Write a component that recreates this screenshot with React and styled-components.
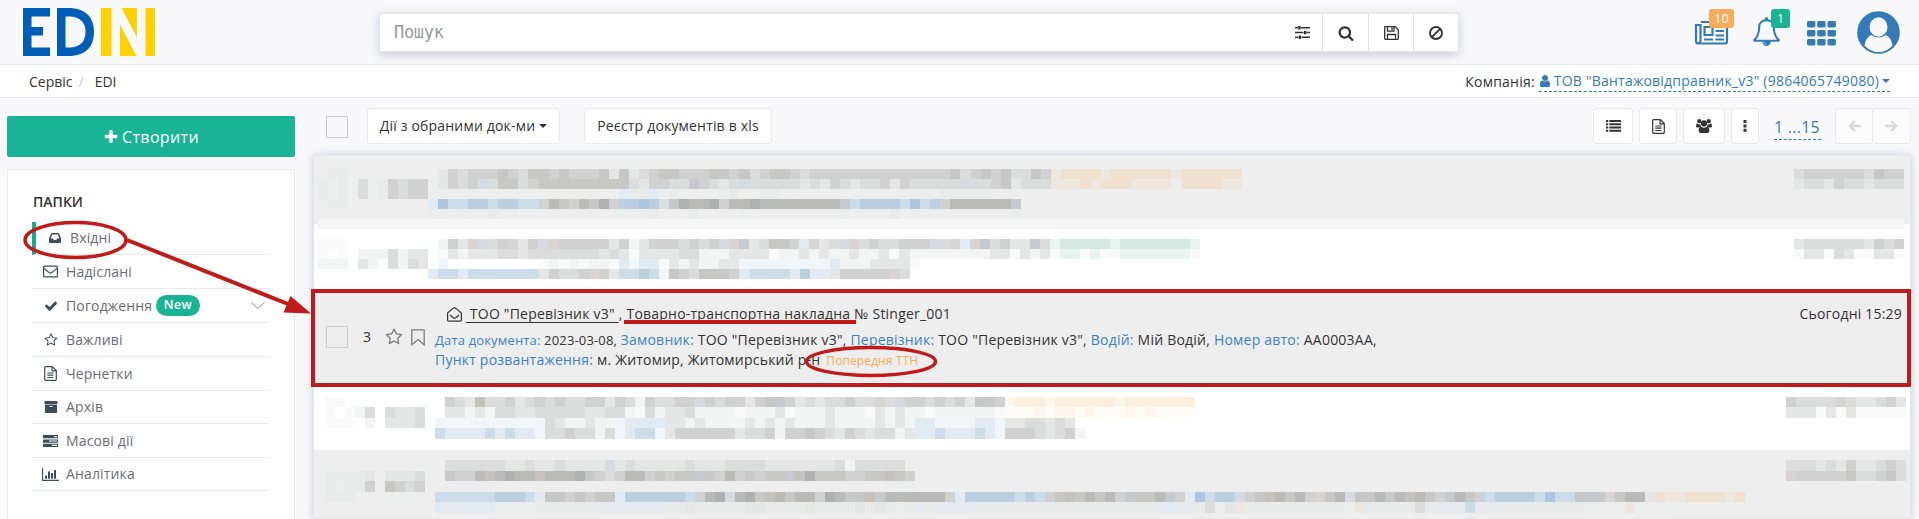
import React from 'react';
import styled, { createGlobalStyle, css } from 'styled-components';

const Global = createGlobalStyle`
  * { box-sizing: border-box; }
  html, body { margin: 0; height: 519px; overflow: hidden; }
  body { background: #f9f9fb; color: #333; font: 14px/20px "Open Sans", sans-serif; }
`;

/* ---------- icons ---------- */
const Glyph = styled.svg`
  display: block;
  flex: none;
  overflow: visible;
  fill: ${p => (p.$line ? 'none' : 'currentColor')};
  stroke: ${p => (p.$line ? 'currentColor' : 'none')};
  stroke-width: ${p => p.$line || 0};
`;
const FA = ({ d, w = 14, h = w, box = '0 0 1792 1792' }) => (
  <Glyph width={w} height={h} viewBox={box} preserveAspectRatio="none"><path d={d} /></Glyph>
);
const P = {
  bell: 'M912 1696q0-16-16-16-59 0-101.5-42.5t-42.5-101.5q0-16-16-16t-16 16q0 73 51.5 124.5t124.5 51.5q16 0 16-16zm-666-288h1300q-266-300-266-832 0-51-24-105t-69-103-121.5-80.5-169.5-31.5-169.5 31.5-121.5 80.5-69 103-24 105q0 532-266 832zm1482 0q0 52-38 90t-90 38h-448q0 106-75 181t-181 75-181-75-75-181h-448q-52 0-90-38t-38-90q50-42 91-88t85-119.5 74.5-158.5 50-206 19.5-260q0-152 117-282.5t307-158.5q-8-19-8-39 0-40 28-68t68-28 68 28 28 68q0 20-8 39 190 28 307 158.5t117 282.5q0 139 19.5 260t50 206 74.5 158.5 85 119.5 91 88z',
  star: 'M1201 1004l306-297-422-62-189-382-189 382-422 62 306 297-73 421 378-199 377 199zm527-357q0 22-26 48l-363 354 86 500q1 7 1 20 0 50-41 50-19 0-40-12l-449-236-449 236q-22 12-40 12-21 0-31.5-14.5t-10.5-35.5q0-6 2-20l86-500-364-354q-25-27-25-48 0-37 56-46l502-73 225-455q19-41 49-41t49 41l225 455 502 73q56 9 56 46z',
  search: 'M1216 832q0-185-131.5-316.5t-316.5-131.5-316.5 131.5-131.5 316.5 131.5 316.5 316.5 131.5 316.5-131.5 131.5-316.5zm512 832q0 52-38 90t-90 38q-54 0-90-38l-343-342q-179 124-399 124-143 0-273.5-55.5t-225-150-150-225-55.5-273.5 55.5-273.5 150-225 225-150 273.5-55.5 273.5 55.5 225 150 150 225 55.5 273.5q0 220-124 399l343 343q37 37 37 90z',
  check: 'M1671 566q0 40-28 68l-724 724-136 136q-28 28-68 28t-68-28l-136-136-362-362q-28-28-28-68t28-68l136-136q28-28 68-28t68 28l294 295 656-657q28-28 68-28t68 28l136 136q28 28 28 68z',
  plus: 'M1600 736v192q0 40-28 68t-68 28h-416v416q0 40-28 68t-68 28h-192q-40 0-68-28t-28-68v-416h-416q-40 0-68-28t-28-68v-192q0-40 28-68t68-28h416v-416q0-40 28-68t68-28h192q40 0 68 28t28 68v416h416q40 0 68 28t28 68z',
  user: 'M1536 1399q0 109-62.5 187t-150.5 78h-854q-88 0-150.5-78t-62.5-187q0-85 8.5-160.5t31.5-152 58.5-131 94-89 134.5-34.5q131 128 313 128t313-128q76 0 134.5 34.5t94 89 58.5 131 31.5 152 8.5 160.5zm-256-887q0 159-112.5 271.5t-271.5 112.5-271.5-112.5-112.5-271.5 112.5-271.5 271.5-112.5 271.5 112.5 112.5 271.5z',
  inbox: 'M1151 960h316q-1-3-2.5-8t-2.5-8l-212-496h-708l-212 496q-1 2-2.5 8t-2.5 8h316l95 192h320zm513 30v482q0 26-19 45t-45 19h-1408q-26 0-45-19t-19-45v-482q0-62 25-123l238-552q10-25 36.5-42t52.5-17h832q26 0 52.5 17t36.5 42l238 552q25 61 25 123z',
  archive: 'M1088 832q0-26-19-45t-45-19h-256q-26 0-45 19t-19 45 19 45 45 19h256q26 0 45-19t19-45zm576-192v960q0 26-19 45t-45 19h-1408q-26 0-45-19t-19-45v-960q0-26 19-45t45-19h1408q26 0 45 19t19 45zm64-448v256q0 26-19 45t-45 19h-1536q-26 0-45-19t-19-45v-256q0-26 19-45t45-19h1536q26 0 45 19t19 45z',
};
const Envelope = () => (
  <Glyph $line={1.2} width="15" height="13" viewBox="0 0 15 13"><rect x=".6" y="1.1" width="13.8" height="10.8" rx="1" /><path d="M.8 3.2 6.2 7.6q1.3 1 2.6 0L14.2 3.2" /></Glyph>
);
const OpenEnvelope = () => (
  <Glyph $line={1.2} width="15" height="15" viewBox="0 0 15 15"><path d="M.6 6 6 1.4q1.5-1.1 3 0L14.4 6v7q0 1.2-1.2 1.2H1.8Q.6 14.2.6 13zM3 8l3.3 2.7q1.2.9 2.4 0L12 8" /></Glyph>
);
const FileIcon = () => (
  <Glyph $line={1.2} width="13" height="15" viewBox="0 0 13 15"><path d="M.7 1.4q0-.8.8-.8h6.8l4 4v9q0 .8-.8.8h-10q-.8 0-.8-.8zM8.1.7v4.1h4.1M3.3 7h6.2M3.3 9.2h6.2M3.3 11.5h6.2" /></Glyph>
);
const Tasks = () => (
  <Glyph width="15" height="12" viewBox="0 0 15 12"><path fillRule="evenodd" d="M0 0h15v3.3H0zM11 1v1.2h3V1zM0 4.4h15v3.3H0zM6 5.4v1.2h8V5.4zM0 8.8h15V12H0zM9 9.8V11h5V9.8z" /></Glyph>
);
const BarChart = () => (
  <Glyph width="17" height="13" viewBox="0 0 17 13"><path d="M0 0h1.1v11.8H17V13H0zM3 7.5h2v3.3H3zM6 3.5h2v7.3H6zM9 5h2v5.8H9zM12 2h2v8.8h-2z" /></Glyph>
);
const Sliders = () => (
  <Glyph width="15" height="13" viewBox="0 0 15 13"><path d="M0 1h3v1.4H0zM6 1h9v1.4H6zM3.2 0h2.4v3.5H3.2zM0 5.8h8.5v1.4H0zM11.8 5.8H15v1.4h-3.2zM9 4.8h2.4v3.5H9zM0 10.6h3v1.4H0zM6.5 10.6H15v1.4H6.5zM3.6 9.6H6v3.5H3.6z" /></Glyph>
);
const Save = () => (
  <Glyph $line={1.3} width="15" height="14" viewBox="0 0 15 14"><path d="M.7 1.4q0-.7.7-.7h9.8l3.1 3v8.9q0 .7-.7.7H1.4q-.7 0-.7-.7zM3.5.7v4.5h6.5V.7M8 1.5v2.7M3.5 13V8.5h8V13" /></Glyph>
);
const Ban = () => (
  <Glyph $line={1.9} width="14" height="14" viewBox="0 0 14 14"><circle cx="7" cy="7" r="6" /><path d="M2.8 11.2 11.2 2.8" /></Glyph>
);
const News = () => (
  <Glyph $line={2.2} width="33" height="24" viewBox="0 0 33 24"><path d="M6 1h26v19.5q0 2-2 2H3.5Q1 22.5 1 20V4h4.5v15.5q0 2.5-2 3" /><path d="M9.5 6h8v8h-8zM20.5 6H29M20.5 10H29M20.5 14.5H29M9 18.5h9M20.5 18.5H29" /></Glyph>
);
const Grid9 = () => (
  <Glyph width="29" height="24" viewBox="0 0 29 24">
    {[0, 9, 18].map(y => [0, 10.2, 20.5].map(x => <rect key={x + '-' + y} x={x} y={y} width="8.4" height="6.4" rx="1.4" />))}
  </Glyph>
);
const Avatar = () => (
  <Glyph width="43" height="43" viewBox="0 0 43 43"><circle cx="21.5" cy="21.5" r="21.3" /><path fill="#f9f9fb" d="M7.5 34.5q1.6-8.6 7-10.5 3 2.6 7 2.6t7-2.6q5.4 1.9 7 10.5-5.5 6.6-14 6.6t-14-6.6z" /><ellipse cx="21.5" cy="16" rx="9" ry="9.7" fill="#f9f9fb" /></Glyph>
);
const ListIcon = () => (
  <Glyph width="15" height="12" viewBox="0 0 15 12"><path d="M0 0h2.2v2H0zM3.3 0H15v2H3.3zM0 3.2h2.2v2H0zM3.3 3.2H15v2H3.3zM0 6.4h2.2v2H0zM3.3 6.4H15v2H3.3zM0 9.7h2.2v2H0zM3.3 9.7H15v2H3.3z" /></Glyph>
);
const Group = () => (
  <Glyph width="16" height="14" viewBox="0 0 16 14"><circle cx="3.3" cy="2.2" r="2.1" /><circle cx="12.7" cy="2.2" r="2.1" /><circle cx="8" cy="4.4" r="3.1" /><path d="M0 7.6Q0 4.6 1.3 4.6q2.3 1.2 3 .6Q4.6 7 5.3 7.4q-1.7.2-2.4 1.2H1.2Q0 8.6 0 7.6zM16 7.6q0-3-1.3-3-2.3 1.2-3 .6-.3 1.8-1 2.2 1.7.2 2.4 1.2h1.7q1.2 0 1.2-1zM2.6 12q0-4.2 2.5-4.2Q8 9.6 10.9 7.8q2.5 0 2.5 4.2 0 2-2 2H4.6q-2 0-2-2z" /></Glyph>
);
const Dots = () => (
  <Glyph width="4" height="12" viewBox="0 0 4 12"><path d="M.5 0h3v3h-3zM.5 4.4h3v3h-3zM.5 8.8h3v3h-3z" /></Glyph>
);
const Arrow = ({ flip }) => (
  <Glyph $line={2.4} width="13" height="12" viewBox="0 0 13 12"><path d={flip ? 'M0 6h11M6.2 1l5 5-5 5' : 'M13 6H2M6.8 1l-5 5 5 5'} /></Glyph>
);
const Bookmark = () => (
  <Glyph $line={1.3} width="14" height="17" viewBox="0 0 14 17"><path d="M.8.8h12.4v15L7 10.5.8 15.8z" /></Glyph>
);
const Chevron = () => (
  <Glyph $line={1} width="14" height="7" viewBox="0 0 14 7"><path d="m.5.5 6.5 6 6.5-6" /></Glyph>
);
const Logo = () => (
  <Glyph width="132" height="48" viewBox="0 0 132 48">
    <path fill="#005eb8" d="M0 0h27v8.5H8.5V19H20v8.5H8.5v12H27V48H0z" />
    <path fill="#005eb8" fillRule="evenodd" d="M34 0h14q23 2 23 24T48 48H34zM42.5 8.5v31H48q14.5-1.5 14.5-15.5T48 8.5z" />
    <path fill="#ffd100" d="M78 0h10.5v48H78zM98.5 0H114v29.5zM97 16.5 113.5 48H97zM122.5 0H132v48h-9.5z" />
  </Glyph>
);

/* ---------- header ---------- */
const Header = styled.header`
  display: flex;
  height: 65px;
  padding-left: 23px;
  padding-right: 19px;
  border-bottom: 1px solid #e7eaec;
`;
const Brand = styled.div`
  width: 356px;
  padding-top: 8px;
`;
const Search = styled.div`
  display: flex;
  width: 1080px;
  height: 39px;
  margin-top: 13px;
  background: #fff;
  border: 1px solid #e5e6ea;
  box-shadow: 0 3px 10px rgba(60, 70, 120, .25);
`;
const Placeholder = styled.div`
  flex: 1;
  padding-left: 14px;
  color: #999;
  font: 17px/36px "DejaVu Sans Mono", monospace;
  letter-spacing: -0.3px;
`;
const SearchBtn = styled.div`
  display: flex;
  width: ${p => p.$w}px;
  align-items: center;
  justify-content: center;
  border-left: ${p => (p.$plain ? 0 : '1px solid #e2e3e6')};
`;
const Tools = styled.div`
  display: flex;
  margin-left: auto;
  color: #337ab7;
`;
const Tool = styled.div`
  position: relative;
  margin: ${p => p.$top}px 0 0 ${p => p.$gap || 0}px;
`;
const Badge = styled.span`
  position: absolute;
  top: ${p => p.$y}px;
  left: ${p => p.$x}px;
  width: ${p => p.$w}px;
  height: 19px;
  border-radius: 3px;
  background: ${p => p.$bg};
  color: #fff;
  font-size: 12.5px;
  line-height: 19px;
  text-align: center;
`;
const Crumbs = styled.nav`
  display: flex;
  height: 33px;
  padding: 0 29px;
  background: #fff;
  border-bottom: 1px solid #e7eaec;
  line-height: 33px;
`;
const Slash = styled.span`
  padding: 0 11px 0 6px;
  color: #ccc;
`;
const Company = styled.div`
  display: flex;
  align-items: center;
  gap: 4px;
  margin-left: auto;
  letter-spacing: .22px;
`;
const Link = styled.span`
  display: flex;
  align-items: center;
  gap: ${p => p.$gap || 0}px;
  height: ${p => p.$h}px;
  color: #337ab7;
  border-bottom: 1px dashed #337ab7;
  font-size: ${p => p.$size || 14}px;
`;
const Caret = styled.i`
  border: ${p => p.$s}px solid transparent;
  border-top-color: currentColor;
  border-bottom: 0;
`;

/* ---------- body ---------- */
const Body = styled.main`
  display: flex;
  height: 421px;
  overflow: hidden;
`;
const Side = styled.aside`
  width: 288px;
  margin: 18px 0 0 7px;
`;
const Create = styled.div`
  display: flex;
  height: 41px;
  align-items: center;
  justify-content: center;
  gap: 3px;
  border-radius: 2px;
  background: #1ab394;
  color: #fff;
  font-size: 16px;
  letter-spacing: .35px;
`;
const Folders = styled.div`
  height: 360px;
  margin-top: 12px;
  padding: 22px 24px 0;
  border: 1px solid #e7eaf0;
  background: #fff;
`;
const FolderTitle = styled.div`
  height: 30px;
  padding-left: 1px;
  font-weight: 600;
`;
const Folder = styled.div`
  display: flex;
  height: ${p => p.$h || 34}px;
  align-items: center;
  padding-right: 5px;
  border-bottom: 1px solid #e7eaec;
  color: #6a6c6f;
  letter-spacing: .15px;
  ${p => p.$active && css`
    border-left: 4px solid #19aa8d;
  `}
`;
const FolderIcon = styled.span`
  display: flex;
  width: 37px;
  margin-right: -3px;
  justify-content: center;
  color: #3d4d5d;
`;
const NewTag = styled.b`
  height: 21px;
  margin-left: 4px;
  padding: 0 7.5px;
  border-radius: 11px;
  background: #1ab394;
  color: #fff;
  font-size: 12.5px;
  font-weight: 600;
  line-height: 20px;
  letter-spacing: .35px;
`;
const Push = styled.span`
  margin-left: auto;
  color: #8a8d90;
`;

const Main = styled.section`
  display: flex;
  flex-direction: column;
  width: 1598px;
  margin-left: 18px;
`;
const Toolbar = styled.div`
  display: flex;
  flex: none;
  height: 57px;
  padding: 10px 0 0 13px;
`;
const Checkbox = styled.div`
  flex: none;
  width: 22px;
  height: 22px;
  margin: ${p => p.$m || 0};
  border: 1px solid #cfcbc8;
`;
const Btn = styled.div`
  display: flex;
  width: ${p => p.$w}px;
  height: 36px;
  margin-left: ${p => p.$gap || 0}px;
  align-items: center;
  justify-content: center;
  gap: 4px;
  border: 1px solid #e7eaec;
  border-radius: 3px;
  background: ${p => (p.$off ? '#fcfcfd' : '#fff')};
  color: ${p => (p.$off ? '#d8d8d8' : '#333')};
  letter-spacing: .18px;
  white-space: nowrap;
`;
const BarRight = styled.div`
  display: flex;
  margin-left: auto;
`;
const Range = styled.div`
  width: 47px;
  margin: 7px 14px 0 15px;
  letter-spacing: .25px;
`;
const List = styled.div`
  flex: none;
  border: 1px solid #e4e7ec;
  border-top-color: #e8e9ec;
  box-shadow: 0 0 9px rgba(60, 70, 120, .25);
  background: #fff;
`;
const Row = styled.div`
  position: relative;
  display: flex;
  height: ${p => p.$h}px;
  padding: ${p => p.$pad};
  background: ${p => (p.$grey ? '#eee' : '#fff')};
  border-bottom: ${p => (p.$edge ? '1px solid #e7eaec' : 0)};
`;

/* ---------- pixelated rows ---------- */
const tones = {
  '.': 'transparent', m: '#e9eaea', n: '#eceeed', z: '#fafafa', w: '#f3f4f4',
  a: '#e5e6e6', b: '#dbdcdc', c: '#d1d1d1', d: '#c7c7c6', e: '#babab9', f: '#afb0b1',
  u: '#d7dae0', v: '#c6c9ce', x: '#d9d4d1', y: '#c7c1bd',
  5: '#f1f6fb', 1: '#e2ebf3', 2: '#ccdce9', 3: '#bbcfe0', 4: '#adc6dd', 6: '#e6eaee',
  o: '#efe0d0', p: '#eee7e0', q: '#fdefe0', r: '#fff6ed', t: '#fffbf6', g: '#d5e8e2', h: '#e9f3f0',
};
const Pixels = styled.div`
  flex: none;
  width: ${p => p.$w}px;
  margin: ${p => p.$m || 0};
`;
const PixelLine = styled.div`
  display: flex;
  height: ${p => p.$h}px;
  width: ${p => p.$w}px;
`;
const Pixel = styled.i`
  flex: 1;
  background: ${p => tones[p.$t]};
`;
const Mosaic = ({ lines, w, cell = 10, heights = [10], m }) => (
  <Pixels $w={w} $m={m}>
    {lines.map((line, i) => (
      <PixelLine key={i} $h={heights[i % heights.length]} $w={Math.round(line.length * cell)}>
        {[...line].map((t, k) => <Pixel key={k} $t={t} />)}
      </PixelLine>
    ))}
  </Pixels>
);
const Stripe = styled.div`
  position: absolute;
  left: 4px;
  right: 6px;
  top: 63px;
  height: 10px;
  z-index: 1;
  background: #f6f6f6;
`;

const r1 = [
  '.acbcccdcbddcdcccdadabcddcccddcdbcddcbccccc' + 'cccccccccdbcdcdbbdc' + 'poooopoooooopoooooo',
  '.acbcubddbcdddddddddbaccbbvcbabubbbbbabacba' + 'bbcacbbbbbubbcvabbb' + 'pppopoooppppnoooopp',
  '...................1mm1nm....nm..mm.n...........nn.mmmmmn.',
  '14223323322cedcedfc3343bdfeefceefeeeeeeeev2333324' + '23ceeeeeev',
  'nn.nn.m.n..........n..m...m....n.........n....m...........n',
];
const r2 = [
  '.wcaxubcxacuxcccccacwacccbcbcuxvabddc1xabux' + 'bcbbcccuux1xvbcaavb' + 'hggggghgggggggh',
  '.zawaaabbabbbbbbbabazaaaabbwwwaaaazwwawawwa' + 'wwazawwwwwwwwaazawa' + 'zhhzhzzhhhhhhhz',
  '.5.........zwzwzwwz1511zawawwaa5555555551wwwaaaaz',
  '122122222' + '22acbbcxca2232wdcbdddc12222131' + '1acccccxb',
];
const r4 = [
  '.cbaybbcabcbcbbccacbwcbbccucbccacdvcababbc' + 'bbxbuccbcbcadvc' + 'rqqqrqqqqqqrqqqqqqq',
  '.aawawbbaabbbbbaabbwzbwaabwwwwzwwwazwwwaww' + 'wzawawwzwwwwwwz' + 'tttrtrrtrtttrtrtttt',
  '55555555555bawwaww51111aawawwwwawawawwwaww' + 'wwawa5115555115aabbaba',
  '21111212115bbcbbwb51225accccccabbcwccdcbac' + 'babbwa112111215cccbabcw',
];
const r5 = [
  '.bbbbbbaabaabaaaauab' + 'aaaaabaaabbbbaaaaaaabwbbbbb',
  '.dcceyefeeyeeefdcbceecdcddvdcecdcddvyfddd' + 'ccddydc',
  '..............................................nn',
  '22222233321ddcdcdd13333332cefuefdyedeecfev' + 'dyveeeeeec133333232cdydedecvddevc14233ucdyedecxdeuddev'
    + 'eyedcvedc233332422dvvxdeeaoppoooopo',
  '166111nnn' + 'nmmmmmm6666666mmammmmmaammmmammmma' + 'mamnm6m6161mmmmmmmmmmmmmmmmmm6166mbnapmmmmmmm'
    + 'mmmnp6mmmmb666626' + '6mmmmmmmmmnnnnpnnnn',
];

/* ---------- highlighted document ---------- */
const Frame = styled.div`
  position: absolute;
  z-index: 2;
  left: -3px;
  right: -1px;
  top: -1px;
  height: 98px;
  border: 4px solid #c21a1a;
`;
const Num = styled.span`
  width: 22px;
  margin: 1px 0 0 15px;
`;
const Mark = styled.span`
  margin: ${p => p.$top}px ${p => p.$gap || 0}px 0 0;
  color: #7d7d7d;
`;
const Marks = styled.div`
  display: flex;
  flex: none;
  width: 121px;
  padding: 36px 0 0 12px;
`;
const Doc = styled.div`
  flex: 1;
  padding-top: 14px;
  letter-spacing: .22px;
  white-space: nowrap;
`;
const DocTitle = styled.div`
  display: flex;
  align-items: center;
  height: 20px;
  padding-left: 12px;
`;
const Sender = styled.span`
  margin-left: 4px;
  white-space: pre;
  text-decoration: underline;
  text-underline-offset: 3px;
`;
const Title = styled.span`
  position: relative;
  margin-left: 4px;
  &::after {
    content: '';
    position: absolute;
    left: -2px;
    right: -6px;
    top: 16px;
    height: 4px;
    background: #c21a1a;
  }
`;
const DocLine = styled.div`
  height: 20px;
  margin-top: ${p => p.$top || 0}px;
  b { color: #3c83c3; font-weight: 400; }
`;
const Small = styled.span`
  font-size: 13px;
  letter-spacing: .16px;
`;
const Tag = styled.span`
  margin-left: 6px;
  color: #f8ac59;
  font-size: 12px;
  letter-spacing: .1px;
`;
const When = styled.div`
  padding: 14px 8px 0 0;
  letter-spacing: .2px;
`;
const Notes = styled.svg`
  position: absolute;
  left: 0;
  top: 0;
  z-index: 5;
  pointer-events: none;
`;
const Page = styled.div`
  position: relative;
  width: 1919px;
  height: 519px;
  overflow: hidden;
`;

const folders = [
  { t: 'Вхідні', i: <FA d={P.inbox} w={14} />, active: true, h: 33 },
  { t: 'Надіслані', i: <Envelope /> },
  { t: 'Погодження', i: <FA d={P.check} w={14} />, tag: 'New' },
  { t: 'Важливі', i: <FA d={P.star} w={14} /> },
  { t: 'Чернетки', i: <FileIcon /> },
  { t: 'Архів', i: <FA d={P.archive} w={14} />, h: 33 },
  { t: 'Масові дії', i: <Tasks /> },
  { t: 'Аналітика', i: <BarChart />, h: 33 },
];

export default function App() {
  return (
    <Page>
      <Global />
      <Header>
        <Brand><Logo /></Brand>
        <Search>
          <Placeholder>Пошук</Placeholder>
          <SearchBtn $w={40} $plain><Sliders /></SearchBtn>
          <SearchBtn $w={46}><FA d={P.search} w={16} h={16} /></SearchBtn>
          <SearchBtn $w={45}><Save /></SearchBtn>
          <SearchBtn $w={45}><Ban /></SearchBtn>
        </Search>
        <Tools>
          <Tool $top={21}><News /><Badge $x={14} $y={-12} $w={25} $bg="#f8ac59">10</Badge></Tool>
          <Tool $top={17} $gap={24}><FA d={P.bell} w={29} h={29} /><Badge $x={19} $y={-8} $w={19} $bg="#1ab394">1</Badge></Tool>
          <Tool $top={21} $gap={26}><Grid9 /></Tool>
          <Tool $top={11} $gap={21}><Avatar /></Tool>
        </Tools>
      </Header>
      <Crumbs>
        <span>Сервіс</span><Slash>/</Slash><span>EDI</span>
        <Company>
          Компанія:
          <Link $h={21} $gap={3}><FA d={P.user} w={12} h={14} box="128 0 1536 1792" />ТОВ "Вантажовідправник_v3" (9864065749080)<Caret $s={4.5} /></Link>
        </Company>
      </Crumbs>
      <Body>
        <Side>
          <Create><FA d={P.plus} w={16} />Створити</Create>
          <Folders>
            <FolderTitle>ПАПКИ</FolderTitle>
            {folders.map(f => (
              <Folder key={f.t} $h={f.h} $active={f.active}>
                <FolderIcon>{f.i}</FolderIcon>{f.t}
                {f.tag && <><NewTag>{f.tag}</NewTag><Push><Chevron /></Push></>}
              </Folder>
            ))}
          </Folders>
        </Side>
        <Main>
          <Toolbar>
            <Checkbox $m="8px 0 0" />
            <Btn $w={193} $gap={19}>Дії з обраними док-ми<Caret $s={4} /></Btn>
            <Btn $w={188} $gap={24}>Реєстр документів в xls</Btn>
            <BarRight>
              <Btn $w={40}><ListIcon /></Btn>
              <Btn $w={38} $gap={6}><FileIcon /></Btn>
              <Btn $w={42} $gap={6}><Group /></Btn>
              <Btn $w={28} $gap={6}><Dots /></Btn>
              <Range><Link $h={25} $size={16}>1 ...15</Link></Range>
              <Btn $w={38} $off><Arrow /></Btn>
              <Btn $w={39} $off $gap={-1}><Arrow flip /></Btn>
            </BarRight>
          </Toolbar>
          <List>
            <Row $grey $edge $h={68} $pad="13px 6px 0 4px">
              <Mosaic lines={['.mm', 'm.m', 'm.m', '.mm']} w={30} />
              <Mosaic lines={['bnmcbcc', 'bnmcbcc']} w={70} m="10px 0 0 10px" />
              <Mosaic lines={r1} w={816} cell={10.05} />
              <Mosaic lines={['bccccccbdcc', 'abbacbbabbb']} w={110} m="0 0 0 auto" />
              <Stripe />
            </Row>
            <Row $h={66} $pad="15px 6px 0 4px">
              <Mosaic lines={['zzz', 'z.z', 'www']} w={30} />
              <Mosaic lines={['wwwbwaa', 'aw.bwba']} w={70} m="10px 0 0 10px" />
              <Mosaic lines={r2} w={780} cell={10.04} />
              <Mosaic lines={['abbbbbbacbc', 'zaazbazzaaz']} w={110} m="0 0 0 auto" />
            </Row>
            <Row $grey $edge $h={92} $pad="0">
              <Frame />
              <Marks>
                <Checkbox />
                <Num>3</Num>
                <Mark $top={2} $gap={8}><FA d={P.star} w={18} /></Mark>
                <Mark $top={3}><Bookmark /></Mark>
              </Marks>
              <Doc>
                <DocTitle>
                  <OpenEnvelope /><Sender>{' ТОО "Перевізник v3" '}</Sender>,<Title>Товарно-транспортна накладна</Title>&nbsp;№ Stinger_001
                </DocTitle>
                <DocLine $top={6}>
                  <Small><b>Дата документа:</b> 2023-03-08, </Small>
                  <b>Замовник:</b> ТОО "Перевізник v3", <b>Перевізник:</b> ТОО "Перевізник v3", <b>Водій:</b> Мій Водій, <b>Номер авто:</b> AA0003AA,
                </DocLine>
                <DocLine><b>Пункт розвантаження:</b> м. Житомир, Житомирський р-н<Tag>Попередня ТТН</Tag></DocLine>
              </Doc>
              <When>Сьогодні 15:29</When>
            </Row>
            <Row $h={68} $pad="15px 4px 0 11px">
              <Mosaic lines={['zz...', 'z.zwb', 'zzz.w']} w={50} heights={[10, 11]} />
              <Mosaic lines={['baab', 'aaab']} w={50} heights={[11, 10]} m="10px 0 0 10px" />
              <Mosaic lines={r4} w={770} heights={[10, 11]} />
              <Mosaic lines={['cbbbbxbaabca', 'aaazazazzzzz']} w={120} heights={[10, 11]} m="0 0 0 auto" />
            </Row>
            <Row $grey $edge $h={69} $pad="10px 4px 0 11px">
              <Mosaic lines={['mmmma', 'mnmmc', 'mmm..']} w={50} heights={[10, 11]} m="11px 0 0" />
              <Mosaic lines={['aaab', 'dcbc', 'nnnn']} w={50} heights={[10, 11]} m="11px 0 0 10px" />
              <Mosaic lines={r5} w={1330} heights={[11, 10]} />
              <Mosaic lines={['bbbabacaabcb', 'xcccccdbbcdb']} w={120} heights={[11, 10]} m="0 0 0 auto" />
            </Row>
          </List>
        </Main>
      </Body>
      <Notes width="1919" height="519" fill="none" stroke="#c21a1a">
        <ellipse cx="75.5" cy="240" rx="50.5" ry="17.5" strokeWidth="3.5" />
        <path d="M127 240 288 304" strokeWidth="4" />
        <path d="M311 313.5 290.5 296 283.5 312.5z" fill="#c21a1a" stroke="none" />
        <ellipse cx="871" cy="361.5" rx="64.5" ry="14" strokeWidth="3.5" />
      </Notes>
    </Page>
  );
}
